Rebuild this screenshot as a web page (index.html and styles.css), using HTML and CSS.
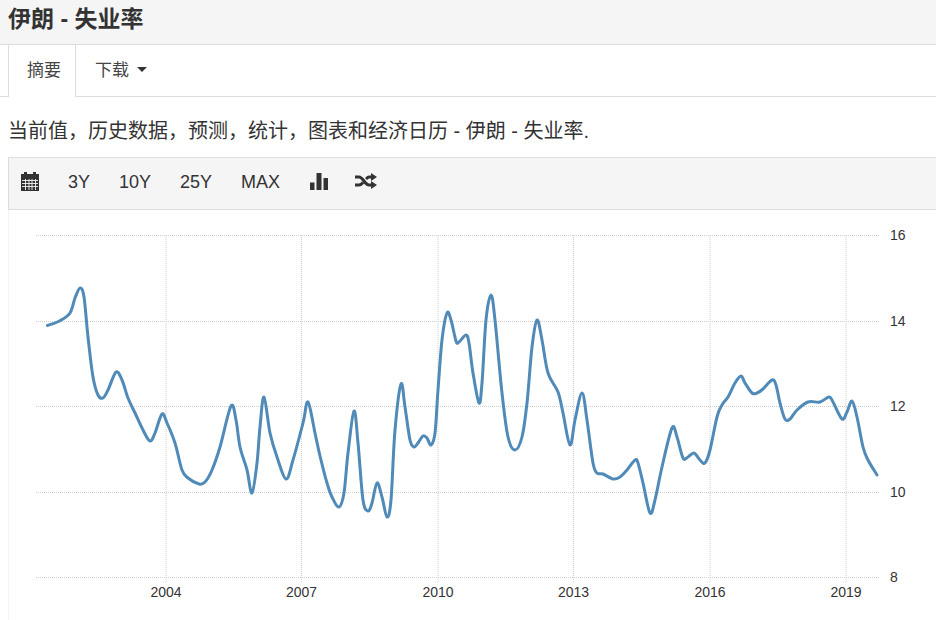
FILE: index.html
```html
<!DOCTYPE html>
<html lang="zh">
<head>
<meta charset="utf-8">
<title>伊朗 - 失业率</title>
<link rel="stylesheet" href="styles.css">
</head>
<body>
<header class="title-bar"><h1>伊朗 - 失业率</h1></header>
<nav class="tabs">
  <a class="tab active">摘要</a>
  <a class="tab">下载 <span class="caret"></span></a>
</nav>
<p class="desc">当前值，历史数据，预测，统计，图表和经济日历 - 伊朗 - 失业率.</p>
<div class="toolbar">
  <svg class="ico cal" viewBox="0 0 18 20"><path d="M0 3h3V1h3v2h6V1h3v2h3v17H0z" fill="#333"/><path d="M1 9.500h16M1 12.500h16M1 15.500h16M4.500 8v11M8 8v11M11 8v11M14.500 8v11" stroke="#f5f5f5" stroke-width=".9"/></svg>
  <span class="range r3">3Y</span>
  <span class="range">10Y</span>
  <span class="range">25Y</span>
  <span class="range">MAX</span>
  <svg class="ico bars" viewBox="0 0 18 18"><path d="M0 10.500h4.500V18H0zM6.500 1h5v17h-5zM13.500 6h4.500v12h-4.500z" fill="#333"/></svg>
  <svg class="ico shuffle" viewBox="0 0 22 16"><path d="M0 4h4c4 0 6 8 10 8h3M0 12h4c1.500 0 2.800-1 4-2.500M11 6c1-1 2-2 3-2h3" fill="none" stroke="#333" stroke-width="3"/><path d="M16 0l6 4-6 4zM16 8l6 4-6 4z" fill="#333"/></svg>
</div>
<div class="chart">
  <svg id="plot" class="plot" viewBox="0 0 928 410" xmlns="http://www.w3.org/2000/svg">
    <g class="grid">
      <path d="M28 25.500H872M28 111.500H872M28 196.500H872M28 282.500H872M28 367.500H872"/>
      <path d="M158 25V372M293.500 25V372M430 25V372M565.500 25V372M702 25V372M838 25V372"/>
    </g>
    <path id="line" class="line" d=""/>
    <g class="ylab">
      <text x="882" y="30">16</text>
      <text x="882" y="116">14</text>
      <text x="882" y="201">12</text>
      <text x="882" y="287">10</text>
      <text x="882" y="372">8</text>
    </g>
    <g class="xlab">
      <text x="158" y="387">2004</text>
      <text x="293.500" y="387">2007</text>
      <text x="430" y="387">2010</text>
      <text x="565.500" y="387">2013</text>
      <text x="702" y="387">2016</text>
      <text x="838" y="387">2019</text>
    </g>
  </svg>
</div>
<script src="chart.js"></script>
</body>
</html>
```
FILE: styles.css
```css
html, body { margin: 0; padding: 0; }
body {
  width: 936px; height: 620px; overflow: hidden; background: #fff; color: #333;
  font-family: "Liberation Sans", "Noto Sans CJK SC", sans-serif;
}
.title-bar {
  height: 44px; box-sizing: content-box; background: #f5f5f5;
  border-bottom: 1px solid #ddd; padding-left: 8px;
}
.title-bar h1 { margin: 0; font-size: 23px; line-height: 39px; font-weight: bold; color: #333; }
.tabs {
  display: flex; height: 51px; padding-left: 8px; border-bottom: 1px solid #ddd; align-items: stretch;
}
.tab { display: flex; align-items: center; gap: 8px; padding: 0 19px 5px 19px; font-size: 17px; color: #444; }
.tab.active {
  padding-left: 18px; padding-right: 14px;
  border-left: 1px solid #ddd; border-right: 1px solid #ddd;
  margin-bottom: -1px; background: #fff;
}
.caret {
  width: 0; height: 0; border-top: 5px solid #333; margin-top: 3px;
  border-left: 5px solid transparent; border-right: 5px solid transparent;
}
.desc { margin: 0; padding: 21px 0 0 8px; height: 39px; font-size: 20px; line-height: 26px; color: #333; }
.toolbar {
  display: flex; align-items: center; margin-left: 8px; height: 51px;
  background: #f5f5f5; border: 1px solid #ddd; border-right: 0; padding-left: 12px;
}
.range { font-size: 18px; color: #333; margin: 0 29px 2px 0; }
.range.r3 { margin-left: 29px; }
.ico { display: block; margin-bottom: 5px; }
.cal { width: 18px; height: 20px; }
.bars { width: 18px; height: 18px; margin-left: 1px; }
.shuffle { width: 22px; height: 16px; margin-left: 27px; }
.chart { margin-left: 8px; border-left: 1px solid #f4f4f4; height: 410px; }
.plot { display: block; width: 928px; height: 410px; margin-left: -1px; }
.grid path { fill: none; stroke: #cfcfcf; stroke-width: 1; stroke-dasharray: 1 1; }
.line { fill: none; stroke: #4f8ab8; stroke-width: 3; stroke-linejoin: round; stroke-linecap: round; }
.ylab text { font-size: 14px; fill: #333; font-family: "Liberation Sans", sans-serif; }
.xlab text { font-size: 14px; fill: #333; text-anchor: middle; font-family: "Liberation Sans", sans-serif; }
```
FILE: chart.js
```js
// Unemployment series, as page coordinates of the curve; drawn as a Catmull-Rom spline.
var P = [47.5,325.5,60,320.7,70,313,75,298,80,288,84,297,88,337,93,377,98,395,103,398,108,390,116,372,122,380,128,398,135,413,143,430,150,441,155,433,162,414,167,423,175,443,182,470,188,478,199,484,205,482,212,470,220,447,231,406,236,420,240,447,247,470,252,493,257,463,260,427,264,397,270,433,277,457,286,479,293,460,303,423,308,402,315,433,320,456,327,483,332,497,339,507,344,493,348,453,354,411,358,443,363,500,368,511,372,503,377,483,382,497,387,517,391,500,395,430,401,384,405,407,410,440,414,447,418,443,423,436,427,438,431,445,435,433,438,390,442,340,447,313,451,320,456,341,459,342,466,335,469,343,473,373,479,403,482,383,486,320,491,295,495,320,502,393,508,437,515,450,522,437,527,403,532,347,537,320,542,340,548,373,558,392,563,413,570,445,575,420,582,393,587,420,593,463,597,473,603,474,613,479,620,477,627,470,635,460,638,463,643,483,650,513,655,500,662,467,672,428,677,437,683,458,688,457,694,453,700,460,705,463,710,450,717,417,722,405,728,397,735,383,741,376,745,383,752,393,757,393,763,389,772,380,776,385,780,403,785,419,790,419,797,410,808,402,820,402,829,397,833,402,842,419,847,412,852,401,857,417,863,447,868,460,877,475];
var pts = [];
for (var i = 0; i < P.length; i += 2) pts.push([P[i] - 8, P[i + 1] - 210]);
var d = "M" + pts[0][0] + " " + pts[0][1];
for (var j = 0; j < pts.length - 1; j++) {
  var a = pts[Math.max(j - 1, 0)], b = pts[j], c = pts[j + 1], e = pts[Math.min(j + 2, pts.length - 1)];
  d += "C" + (b[0] + (c[0] - a[0]) / 6).toFixed(1) + " " + (b[1] + (c[1] - a[1]) / 6).toFixed(1) + " " +
       (c[0] - (e[0] - b[0]) / 6).toFixed(1) + " " + (c[1] - (e[1] - b[1]) / 6).toFixed(1) + " " + c[0] + " " + c[1];
}
document.getElementById("line").setAttribute("d", d);
```
